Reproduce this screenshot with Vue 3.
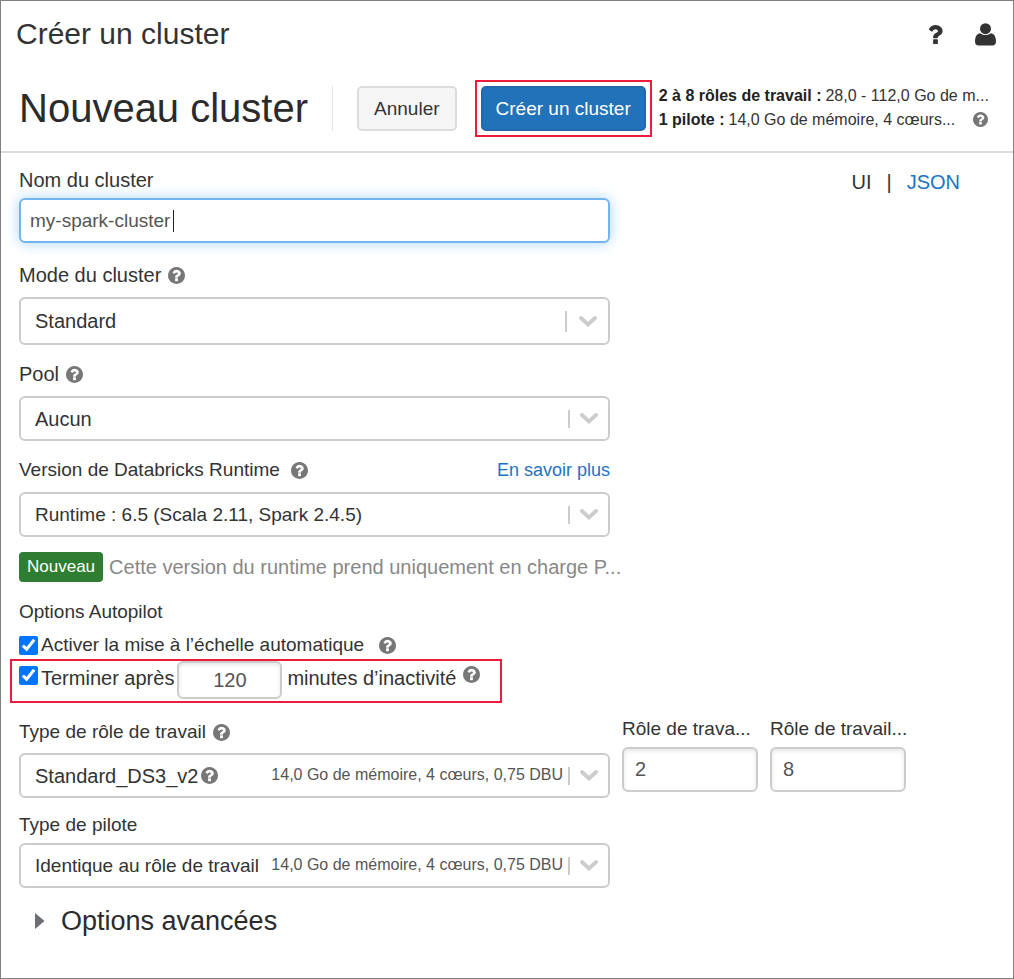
<script setup>
import { h, ref } from 'vue'

const clusterName = ref('my-spark-cluster')
const mode = ref('Standard')
const pool = ref('Aucun')
const runtime = ref('Runtime : 6.5 (Scala 2.11, Spark 2.4.5)')
const autoscale = ref(true)
const autoTerminate = ref(true)
const idleMinutes = ref('120')
const workerType = ref('Standard_DS3_v2')
const driverType = ref('Identique au rôle de travail')
const minWorkers = ref('2')
const maxWorkers = ref('8')
const nodeDetails = '14,0 Go de mémoire, 4 cœurs, 0,75 DBU'

const helpPath =
  'M1024 1376v-192q0-14-9-23t-23-9h-192q-14 0-23 9t-9 23v192q0 14 9 23t23 9h192q14 0 23-9t9-23zm256-672q0-88-55.5-163t-138.5-116-170-41q-243 0-371 213-15 24 8 42l132 100q7 6 19 6 16 0 25-12 53-68 86-92 34-24 86-24 48 0 85.5 26t37.5 59q0 38-20 61t-68 45q-63 28-115.5 86.5t-52.5 125.5v36q0 14 9 23t23 9h192q14 0 23-9t9-23q0-19 21.5-49.5t54.5-49.5q32-18 49-28.5t46-35 44.5-48 28-60.5 12.5-81zm384 192q0 209-103 385.5t-279.5 279.5-385.5 103-385.5-103-279.5-279.5-103-385.5 103-385.5 279.5-279.5 385.5-103 385.5 103 279.5 279.5 103 385.5z'

const HelpIcon = () =>
  h('svg', { viewBox: '128 128 1536 1536', 'aria-hidden': 'true' }, [h('path', { d: helpPath, fill: 'currentColor' })])

const Indicator = () =>
  h('span', { 'aria-hidden': 'true' }, [
    h('i'),
    h('svg', { viewBox: '0 0 18 11' }, [
      h('path', { d: 'M2 2l7 6.5L16 2', fill: 'none', stroke: 'currentColor', 'stroke-width': 3.8, 'stroke-linecap': 'round' }),
    ]),
  ])
</script>

<template>
  <div class="page">
    <header class="topbar">
      <span class="crumb">Créer un cluster</span>
      <nav class="tools">
        <button type="button" class="icon-btn" aria-label="Aide">
          <svg class="question" viewBox="385 256 1020 1280"><path fill="currentColor" d="M1088 1256v240q0 16-12 28t-28 12h-240q-16 0-28-12t-12-28v-240q0-16 12-28t28-12h240q16 0 28 12t12 28zm316-600q0 54-15.5 101t-35 76.5-55 59.5-57.5 43.5-61 35.5q-41 23-68.5 65t-27.5 67q0 17-12 32.5t-28 15.5h-240q-15 0-25.5-18.5t-10.5-37.5v-45q0-83 65-156.5t143-108.5q59-27 84-56t25-76q0-42-46.5-74t-107.5-32q-65 0-108 29-35 25-107 115-13 16-31 16-12 0-25-8l-164-125q-13-10-15.5-25t5.5-28q160-266 464-266 80 0 161 31t146 83 106 127.5 41 158.5z" /></svg>
        </button>
        <button type="button" class="icon-btn" aria-label="Compte">
          <svg class="user" viewBox="0 0 21 23"><path fill="currentColor" d="M5.3 10.2C7.2 12.6 13.8 12.6 15.7 10.2C19.3 10.6 21 14 21 18.6C21 21 19.6 22.6 17.4 22.6H3.6C1.4 22.6 0 21 0 18.6C0 14 1.7 10.6 5.3 10.2Z" /><circle cx="10.5" cy="5.7" r="5.5" fill="currentColor" /></svg>
        </button>
      </nav>
    </header>

    <section class="headbar">
      <h1>Nouveau cluster</h1>
      <button type="button" class="btn">Annuler</button>
      <div class="callout">
        <button type="submit" form="cluster-form" class="btn primary">Créer un cluster</button>
      </div>
      <div class="summary">
        <div class="summary-line"><b>2 à 8 rôles de travail :</b> 28,0 - 112,0 Go de m...</div>
        <div class="summary-line"><b>1 pilote :</b> 14,0 Go de mémoire, 4 cœurs... <HelpIcon class="help small" /></div>
      </div>
    </section>

    <form id="cluster-form" @submit.prevent>
      <div class="row large">
        <div class="field name">
          <label for="name">Nom du cluster</label>
          <div class="control">
            <input id="name" v-model="clusterName" type="text" class="box focused" />
            <span class="caret" aria-hidden="true"></span>
          </div>
        </div>
        <div class="view-switch"><span>UI</span><span>|</span><a href="#json">JSON</a></div>
      </div>

      <div class="row large mode-row">
        <div class="field">
          <div class="label-line"><label for="mode">Mode du cluster</label><HelpIcon class="help" /></div>
          <div class="control">
            <select id="mode" v-model="mode" class="box tall"><option>Standard</option></select>
            <Indicator class="indicator wide" />
          </div>
        </div>
      </div>

      <div class="row large spaced">
        <div class="field">
          <div class="label-line"><label for="pool">Pool</label><HelpIcon class="help" /></div>
          <div class="control">
            <select id="pool" v-model="pool" class="box"><option>Aucun</option></select>
            <Indicator class="indicator" />
          </div>
        </div>
      </div>

      <div class="row spaced">
        <div class="field">
          <div class="label-line">
            <label for="runtime">Version de Databricks Runtime</label><HelpIcon class="help apart" />
            <a href="#runtime" class="more">En savoir plus</a>
          </div>
          <div class="control">
            <select id="runtime" v-model="runtime" class="box"><option>Runtime : 6.5 (Scala 2.11, Spark 2.4.5)</option></select>
            <Indicator class="indicator" />
          </div>
        </div>
      </div>

      <p class="notice large"><span class="badge">Nouveau</span>Cette version du runtime prend uniquement en charge P...</p>

      <div class="autopilot">
        <div class="group-title">Options Autopilot</div>
        <div class="check-line">
          <input id="autoscale" v-model="autoscale" type="checkbox" />
          <label for="autoscale">Activer la mise à l’échelle automatique</label>
          <HelpIcon class="help check-help" />
        </div>
        <div class="callout check-line terminate large">
          <input id="terminate" v-model="autoTerminate" type="checkbox" />
          <label for="terminate">Terminer après</label>
          <input id="minutes" v-model="idleMinutes" type="text" class="box minutes" />
          <label for="minutes">minutes d’inactivité</label>
          <HelpIcon class="help apart" />
        </div>
      </div>

      <div class="row workers">
        <div class="field worker-type">
          <div class="label-line"><label for="worker">Type de rôle de travail</label><HelpIcon class="help" /></div>
          <div class="control">
            <select id="worker" v-model="workerType" class="box large"><option>Standard_DS3_v2</option></select>
            <HelpIcon class="help inside" />
            <span class="details">{{ nodeDetails }}</span>
            <Indicator class="indicator" />
          </div>
        </div>
        <div class="field count">
          <label for="min">Rôle de trava...</label>
          <input id="min" v-model="minWorkers" type="text" class="box shaded large" />
        </div>
        <div class="field count">
          <label for="max">Rôle de travail...</label>
          <input id="max" v-model="maxWorkers" type="text" class="box shaded large" />
        </div>
      </div>

      <div class="row driver">
        <div class="field">
          <label for="driver">Type de pilote</label>
          <div class="control">
            <select id="driver" v-model="driverType" class="box"><option>Identique au rôle de travail</option></select>
            <span class="details">{{ nodeDetails }}</span>
            <Indicator class="indicator" />
          </div>
        </div>
      </div>

      <button type="button" class="advanced">
        <svg viewBox="0 0 10 16" aria-hidden="true"><path d="M0 0L9.5 8L0 16Z" fill="#6b6e72" /></svg>
        Options avancées
      </button>
    </form>
  </div>
</template>

<style>
body {
  margin: 0;
}
</style>

<style scoped>
.page,
.page * {
  box-sizing: border-box;
}
.page {
  min-height: 100vh;
  border: 1px solid #7f7f7f;
  background: #fff;
  color: #333;
  font-family: "Liberation Sans", Arial, sans-serif;
  font-size: 19px;
  line-height: 24px;
}
button,
input,
select {
  margin: 0;
  font: inherit;
  color: inherit;
}
a {
  color: #2272c3;
  text-decoration: none;
}
label {
  white-space: nowrap;
}
.topbar {
  display: flex;
  align-items: center;
  justify-content: space-between;
  height: 66px;
  padding: 0 17px 0 15px;
}
.crumb {
  font-size: 30px;
  line-height: 34px;
}
.tools {
  display: flex;
  align-items: center;
  gap: 32px;
}
.icon-btn {
  display: flex;
  padding: 0;
  border: 0;
  background: none;
  color: #333;
}
.question {
  width: 16px;
  height: 19px;
}
.user {
  width: 21px;
  height: 23px;
}
.headbar {
  display: flex;
  align-items: center;
  padding: 13px 12px 14px 18px;
  border-bottom: 2px solid #dcdcdc;
}
h1 {
  flex: none;
  margin: 0 24px 0 0;
  padding-right: 24px;
  border-right: 1px solid #e3e3e3;
  color: #2b2b2b;
  font-size: 40px;
  font-weight: 400;
  line-height: 45px;
}
.btn {
  flex: none;
  height: 45px;
  padding: 0 15px;
  border: 2px solid #dcdcdc;
  border-radius: 5px;
  background: #f5f5f5;
  white-space: nowrap;
}
.callout {
  flex: none;
  border: 2px solid #ee1c3c;
}
.headbar .callout {
  margin-left: 18px;
  padding: 4px;
}
.primary {
  display: block;
  padding: 0 13px;
  border-color: #2368ab;
  background: #2272b9;
  color: #fff;
}
.summary {
  min-width: 0;
  margin-left: 7px;
  padding-bottom: 2px;
  font-size: 16px;
}
.summary-line {
  display: flex;
  align-items: center;
  gap: 4px;
  white-space: nowrap;
}
.summary-line b {
  color: #222;
}
form {
  padding: 15px 18px 20px;
}
.row {
  display: grid;
  grid-template-columns: 591fr 136fr 136fr 77fr;
  column-gap: 12px;
}
.large {
  font-size: 20px;
}
.field {
  display: flex;
  flex-direction: column;
  gap: 10px;
  min-width: 0;
}
.name,
.count,
.driver .field {
  gap: 6px;
}
.label-line {
  display: flex;
  align-items: center;
  gap: 7px;
}
.more {
  margin-left: auto;
  font-size: 18px;
}
.help {
  flex: none;
  width: 17px;
  height: 17px;
  color: #777;
}
.small {
  width: 15px;
  height: 15px;
  margin-left: 14px;
}
.control {
  display: grid;
  grid-template-columns: minmax(0, 1fr);
  align-items: center;
}
.control > * {
  grid-area: 1 / 1;
}
.box {
  width: 100%;
  height: 45px;
  padding: 0 14px;
  border: 2px solid #ccc;
  border-radius: 6px;
  outline: 0;
  background: #fff;
  appearance: none;
}
.tall {
  height: 48px;
}
.focused {
  padding: 0 9px;
  border-color: #74b4ef;
  box-shadow: 0 0 14px #a9d5f8;
  color: #555;
  font-size: 19px;
}
.caret {
  width: 1px;
  height: 22px;
  margin-left: 154px;
  background: #222;
}
.shaded {
  padding: 0 11px;
  box-shadow: inset 0 2px 4px #e6e6e6;
  color: #555;
}
.indicator {
  display: flex;
  align-items: center;
  justify-self: end;
  gap: 10px;
  margin-right: 12px;
  color: #ccc;
  pointer-events: none;
}
.indicator :deep(i) {
  width: 2px;
  height: 18px;
  background: #ccc;
}
.indicator :deep(svg) {
  width: 18px;
  height: 11px;
}
.wide {
  gap: 12px;
  margin-right: 13px;
}
.wide :deep(i) {
  height: 21px;
}
.details {
  justify-self: end;
  margin-right: 47px;
  padding-bottom: 2px;
  color: #555;
  font-size: 16px;
  pointer-events: none;
}
.inside {
  margin-left: 182px;
}
.view-switch {
  display: flex;
  grid-column: 2 / 5;
  justify-content: flex-end;
  gap: 15px;
  padding: 2px 35px 0 0;
}
.mode-row {
  margin-top: 20px;
}
.spaced {
  margin-top: 17px;
}
.notice {
  display: flex;
  align-items: center;
  gap: 6px;
  margin: 15px 0 18px;
  color: #888;
  white-space: nowrap;
}
.badge {
  padding: 0 8px;
  border-radius: 4px;
  background: #2e7d32;
  color: #fff;
  font-size: 17px;
  line-height: 30px;
}
.check-line {
  display: flex;
  align-items: center;
  gap: 3px;
  margin-top: 9px;
}
.check-line input[type='checkbox'] {
  flex: none;
  width: 19px;
  height: 19px;
  accent-color: #0075ff;
}
.apart {
  margin-left: 4px;
}
.check-help {
  margin-left: 12px;
}
.terminate {
  width: fit-content;
  margin: 2px 0 0 -9px;
  padding: 0 20px 2px 7px;
}
.terminate input[type='checkbox'],
.terminate .help {
  align-self: flex-start;
  margin-top: 5px;
}
.terminate label {
  padding-bottom: 4px;
}
.minutes {
  width: 105px;
  height: 38px;
  margin-right: 2px;
  box-shadow: inset 0 2px 4px #e6e6e6;
  color: #555;
  text-align: center;
}
.workers {
  margin-top: 14px;
}
.worker-type {
  gap: 9px;
  padding-top: 3px;
}
.driver {
  margin-top: 15px;
}
.advanced {
  display: flex;
  align-items: center;
  gap: 16px;
  margin-top: 17px;
  padding: 0 16px;
  border: 0;
  background: none;
  color: #2b2b2b;
  font-size: 27px;
  line-height: 32px;
}
.advanced svg {
  width: 10px;
  height: 16px;
}
</style>
